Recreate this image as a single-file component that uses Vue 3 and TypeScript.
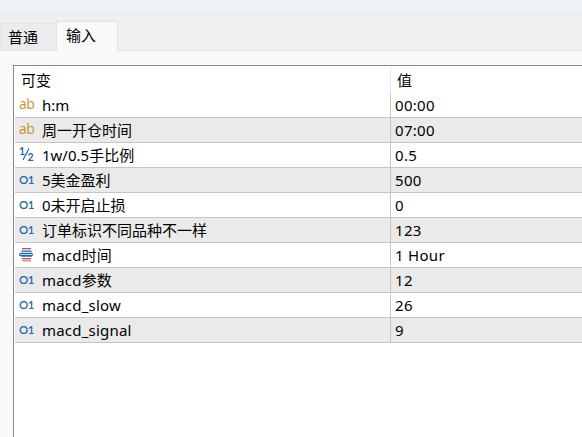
<script setup lang="ts">
import { ref } from "vue";

type Kind = "string" | "double" | "int" | "period";

interface Param {
  kind: Kind;
  name: string;
  value: string;
}

const tabs = ["普通", "输入"];
const active = ref(1);

const params = ref<Param[]>([
  { kind: "string", name: "h:m", value: "00:00" },
  { kind: "string", name: "周一开仓时间", value: "07:00" },
  { kind: "double", name: "1w/0.5手比例", value: "0.5" },
  { kind: "int", name: "5美金盈利", value: "500" },
  { kind: "int", name: "0未开启止损", value: "0" },
  { kind: "int", name: "订单标识不同品种不一样", value: "123" },
  { kind: "period", name: "macd时间", value: "1 Hour" },
  { kind: "int", name: "macd参数", value: "12" },
  { kind: "int", name: "macd_slow", value: "26" },
  { kind: "int", name: "macd_signal", value: "9" },
]);
</script>

<template>
  <div class="dialog">
    <div class="title-strip"></div>
    <div class="tabs">
      <div
        v-for="(tab, i) in tabs"
        :key="tab"
        class="tab"
        :class="{ active: i === active }"
        @click="active = i"
      >
        {{ tab }}
      </div>
      <div class="tabs-rest"></div>
    </div>
    <div class="page">
      <div class="grid">
        <div class="head">
          <div class="head-name">可变</div>
          <div class="head-value">值</div>
        </div>
        <div v-for="p in params" :key="p.name" class="row">
          <div class="name">
            <span class="icon" :class="p.kind">
              <template v-if="p.kind === 'string'">ab</template>
              <template v-else-if="p.kind === 'int'">O1</template>
              <svg v-else-if="p.kind === 'double'" width="16" height="16">
                <text x="0" y="7.5" font-size="10.5">1</text>
                <path d="M4 13L10 1.5" stroke="#1a6da6" stroke-width="1.2" />
                <text x="8.4" y="13.5" font-size="10.5">2</text>
              </svg>
              <svg v-else width="14" height="16">
                <path d="M3 1.5h9M3 11.5h9" stroke="#e04545" />
                <path d="M3 12.5h9" stroke="#f6cccc" />
                <path d="M3 13.5h9" stroke="#ec8a8a" />
                <path d="M3 14.5h9" stroke="#f6cccc" />
                <path d="M3 2.5h9" stroke="#e6d3da" />
                <path d="M3 3.5h9" stroke="#7fb5d8" />
                <path d="M2 4.5h11M2 9.5h11" stroke="#4f97c6" />
                <path d="M2 5.5h11" stroke="#c3dcec" />
                <rect x="0.5" y="6.5" width="13" height="2" rx="0.5" fill="#a9dcf5" stroke="#1a6da6" />
              </svg>
            </span>
            <span class="label" :class="{ latin: p.name.startsWith('macd') }">{{ p.name }}</span>
          </div>
          <div class="value">{{ p.value }}</div>
        </div>
      </div>
    </div>
  </div>
</template>

<style>
body {
  overflow: hidden;
}
</style>

<style scoped>
.dialog {
  display: flex;
  flex-direction: column;
  height: 100vh;
  overflow: hidden;
  background: #efefef;
  color: #000;
  font-family: "Noto Sans", "Noto Sans CJK SC", sans-serif;
  font-size: 15px;
}

.title-strip {
  flex: none;
  height: 11px;
  background: #edf3f7;
}

.tabs {
  flex: none;
  display: flex;
  align-items: flex-end;
  height: 40px;
}

.tab {
  box-sizing: border-box;
  width: 56px;
  height: 28px;
  padding-left: 7px;
  border: 1px solid #e2e2e2;
  border-right: none;
  background: #ececec;
  line-height: 26px;
  white-space: nowrap;
}

.tab.active {
  width: 62px;
  height: 30px;
  padding-left: 9px;
  border-right: 1px solid #e2e2e2;
  border-bottom: none;
  background: #f9f9f9;
}

.tabs-rest {
  flex: 1;
  height: 1px;
  background: #e2e2e2;
}

.page {
  flex: 1;
  display: flex;
  padding: 14px 0 0 13px;
  background: #f9f9f9;
}

.grid {
  flex: 1;
  border-top: 1px solid #828790;
  border-left: 1px solid #828790;
  background: #fff;
  padding: 1px 0 0 1px;
}

.head {
  display: flex;
  height: 26px;
  line-height: 27px;
}

.head-name {
  box-sizing: border-box;
  width: 376px;
  padding-left: 6px;
  border-right: 1px solid #e5e5e5;
}

.head-value {
  padding-left: 6px;
}

.row {
  box-sizing: border-box;
  display: flex;
  height: 25px;
  border-bottom: 1px solid #c5c5c5;
  line-height: 25px;
  white-space: nowrap;
}

.row:nth-child(odd) {
  background: #eaeaea;
}

.name {
  box-sizing: border-box;
  display: flex;
  width: 376px;
  border-right: 1px solid #c5c5c5;
}

.icon {
  flex: none;
  box-sizing: border-box;
  width: 27px;
  padding-left: 4px;
}

.icon svg {
  display: block;
  margin-top: 4px;
  overflow: visible;
}

.string {
  color: #c8922a;
  font-family: "Open Sans", sans-serif;
  font-size: 14px;
  letter-spacing: -0.5px;
  line-height: 22px;
}

.int {
  color: #1a6da6;
  font-family: Lato, sans-serif;
  font-size: 11.5px;
  font-weight: 600;
  letter-spacing: -0.5px;
  line-height: 24px;
}

.double text {
  fill: #1a6da6;
  font-family: Lato, sans-serif;
  font-weight: 700;
}

.latin {
  letter-spacing: 0.2px;
}

.value {
  padding-left: 4px;
  letter-spacing: 0.3px;
}
</style>
